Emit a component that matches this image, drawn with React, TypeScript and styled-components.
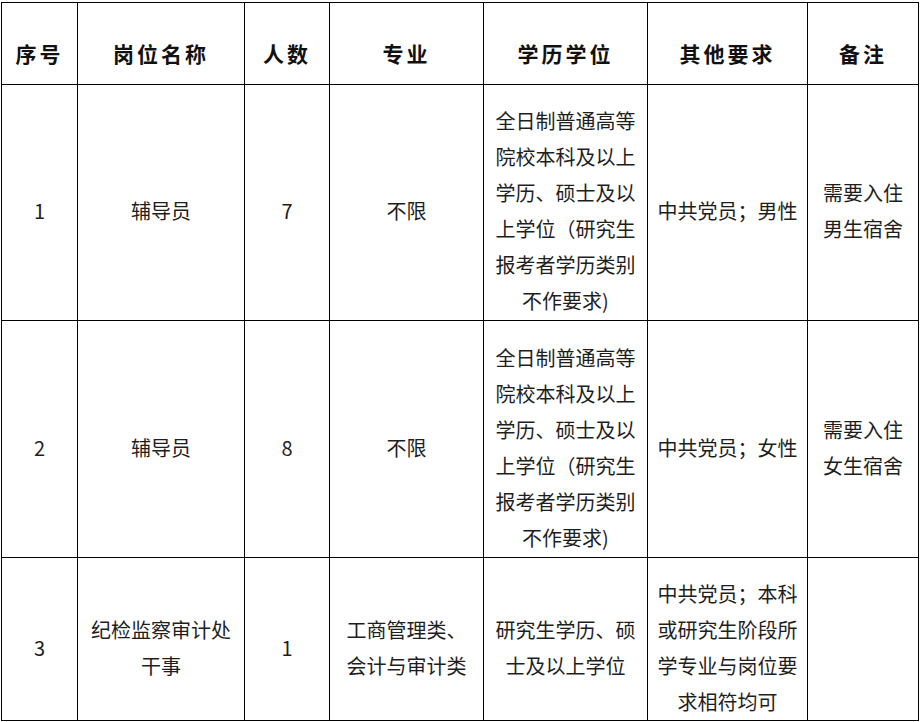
import styled, { createGlobalStyle } from "styled-components";

const GlobalStyle = createGlobalStyle`
  html, body {
    margin: 0;
    padding: 0;
    background: #fff;
  }
  body {
    font-family: "Noto Sans CJK SC", "Microsoft YaHei", sans-serif;
  }
`;

const Page = styled.div`
  padding: 2px 0 0 1px;
`;

const Table = styled.table`
  width: 917px;
  border-collapse: collapse;
  table-layout: fixed;
`;

const Row = styled.tr<{ h: number }>`
  height: ${({ h }) => h}px;
`;

const HeadCell = styled.th`
  border: 1px solid #000;
  padding: 18px 4px 0;
  vertical-align: middle;
  text-align: center;
  font-family: "Liberation Serif", "Noto Sans CJK SC", serif;
  font-weight: 700;
  font-size: 21px;
  letter-spacing: 3px;
  color: #111;
`;

const Cell = styled.td`
  border: 1px solid #000;
  padding: 17px 4px 0;
  vertical-align: middle;
  text-align: center;
  font-size: 20px;
  line-height: 36px;
  color: #1e1e1e;
`;

const Line = styled.div`
  white-space: nowrap;
`;

const columns = [
  { title: "序号", width: 76 },
  { title: "岗位名称", width: 167 },
  { title: "人数", width: 85 },
  { title: "专业", width: 154 },
  { title: "学历学位", width: 164 },
  { title: "其他要求", width: 160 },
  { title: "备注", width: 111 },
];

const degreeFull = [
  "全日制普通高等",
  "院校本科及以上",
  "学历、硕士及以",
  "上学位（研究生",
  "报考者学历类别",
  "不作要求)",
];

interface Post {
  id: number;
  height: number;
  cells: string[][];
}

const posts: Post[] = [
  {
    id: 1,
    height: 236,
    cells: [["1"], ["辅导员"], ["7"], ["不限"], degreeFull, ["中共党员；男性"], ["需要入住", "男生宿舍"]],
  },
  {
    id: 2,
    height: 237,
    cells: [["2"], ["辅导员"], ["8"], ["不限"], degreeFull, ["中共党员；女性"], ["需要入住", "女生宿舍"]],
  },
  {
    id: 3,
    height: 163,
    cells: [
      ["3"],
      ["纪检监察审计处", "干事"],
      ["1"],
      ["工商管理类、", "会计与审计类"],
      ["研究生学历、硕", "士及以上学位"],
      ["中共党员；本科", "或研究生阶段所", "学专业与岗位要", "求相符均可"],
      [],
    ],
  },
];

function App() {
  return (
    <Page>
      <GlobalStyle />
      <Table>
        <colgroup>
          {columns.map((c) => (
            <col key={c.title} style={{ width: c.width }} />
          ))}
        </colgroup>
        <thead>
          <Row h={82}>
            {columns.map((c) => (
              <HeadCell key={c.title}>{c.title}</HeadCell>
            ))}
          </Row>
        </thead>
        <tbody>
          {posts.map((p) => (
            <Row key={p.id} h={p.height}>
              {p.cells.map((lines, i) => (
                <Cell key={i}>
                  {lines.map((l, j) => (
                    <Line key={j}>{l}</Line>
                  ))}
                </Cell>
              ))}
            </Row>
          ))}
        </tbody>
      </Table>
    </Page>
  );
}

export default App;
